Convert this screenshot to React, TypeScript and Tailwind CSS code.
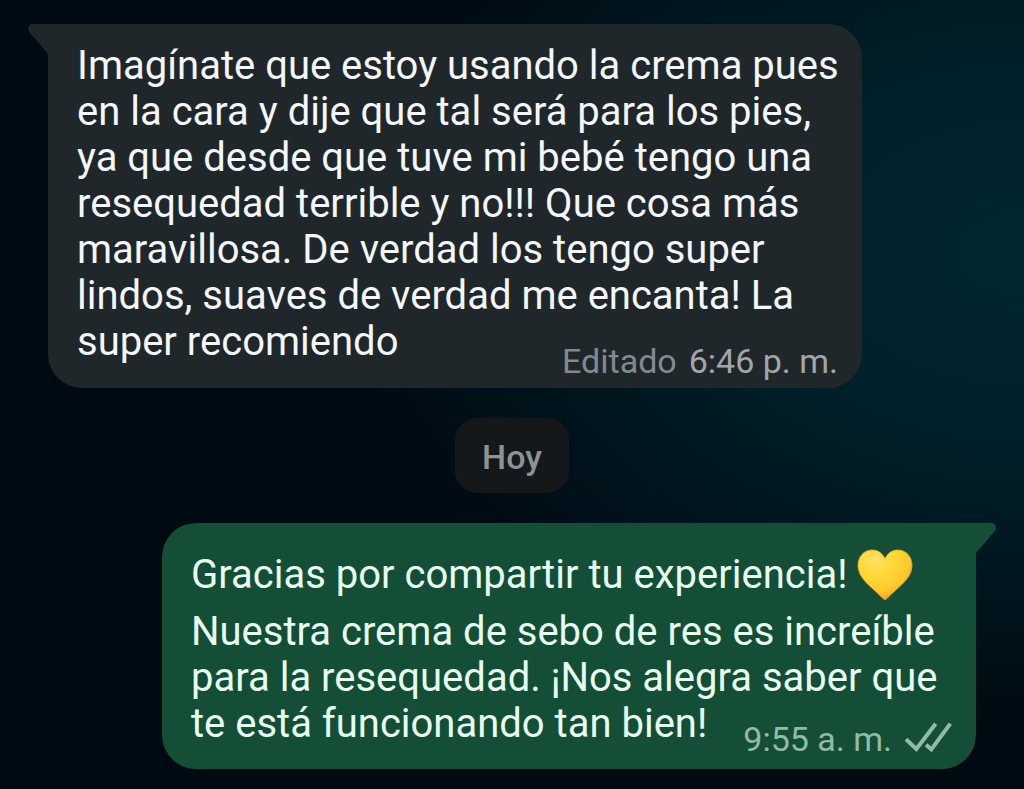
import { clsx } from "clsx";

const HeartEmoji = () => (
  <svg
    role="img"
    aria-label="Corazón amarillo"
    viewBox="0 0 56 52"
    className="inline-block w-[56px] h-[52px] mt-[7px] mb-2 align-[-21px]"
  >
    <defs>
      <radialGradient id="heart" cx="0.32" cy="0.2" r="0.85">
        <stop offset="0" stopColor="#ffe066" />
        <stop offset="0.35" stopColor="#ffd93b" />
        <stop offset="0.75" stopColor="#fdc92c" />
        <stop offset="1" stopColor="#ee9f22" />
      </radialGradient>
    </defs>
    <path
      d="M28 9.500C25 3.500 20.500 1 15 1C7 1 1 7.500 1 16.500C1 30 15 38 26.300 49.800C27.400 50.900 28.600 50.900 29.700 49.800C41 38 55 30 55 16.500C55 7.500 49 1 41 1C35.500 1 31 3.500 28 9.500Z"
      fill="url(#heart)"
      stroke="#e9a323"
      strokeWidth="0.8"
    />
  </svg>
);

const ReadChecks = () => (
  <svg
    role="img"
    aria-label="Entregado"
    viewBox="550 95 144 90"
    className="w-[48px] h-[30px] mb-1"
    fill="none"
    stroke="currentColor"
    strokeWidth="12"
  >
    <path d="M556 147L587 176L645 100" />
    <path d="M616 163L632 177L689 100" />
  </svg>
);

interface BubbleProps {
  sent?: boolean;
  children: React.ReactNode;
  meta: React.ReactNode;
}

const Bubble = ({ sent = false, children, meta }: BubbleProps) => (
  <article
    className={clsx(
      "relative flex flex-col w-full max-w-[814px] pl-[29px] pr-5 pt-[19px] rounded-[34px]",
      sent
        ? "self-end pb-[10px] rounded-tr-none bg-[#154e37] text-[#e6fdf0]"
        : "pb-[7px] rounded-tl-none bg-[#20272b] text-[#f3f6fa]"
    )}
  >
    <svg
      aria-hidden="true"
      viewBox="0 0 20 30"
      className={clsx(
        "absolute top-0 w-5 h-[30px]",
        sent
          ? "left-full -scale-x-100 text-[#154e37]"
          : "right-full text-[#20272b]"
      )}
    >
      <path
        d="M20 0H4.500C1 0-1 4 1.200 8L20 30Z"
        fill="currentColor"
      />
    </svg>
    <p className="text-[40px] leading-[46px]">{children}</p>
    <footer
      className={clsx(
        "flex items-center self-end gap-3 mr-1 text-[34px] leading-[40px]",
        sent ? "-mt-7" : "-mt-6"
      )}
    >
      {meta}
    </footer>
  </article>
);

const App: React.FC = () => {
  return (
    <main className="min-h-screen flex flex-col gap-[30px] px-12 pt-6 pb-5 font-['Roboto',sans-serif] bg-[#000a12] bg-[radial-gradient(ellipse_68%_60%_at_100%_32%,#02272f_0%,#01212a_35%,#001720_65%,transparent_100%)]">
      <Bubble
        meta={
          <>
            <span className="text-[#838a8e]">Editado</span>
            <time className="text-[#a0a6aa]">6:46 p. m.</time>
          </>
        }
      >
        Imagínate que estoy usando la crema pues en la cara y dije que tal será
        para los pies, ya que desde que tuve mi bebé tengo una resequedad
        terrible y no!!! Que cosa más maravillosa. De verdad los tengo super
        lindos, suaves de verdad me encanta! La super recomiendo
      </Bubble>

      <div className="self-center px-[27px] pt-[19px] pb-4 rounded-[22px] bg-[#14181b] text-[#8c9296] text-[34px] leading-[40px] font-medium">
        Hoy
      </div>

      <Bubble
        sent
        meta={
          <div className="flex items-center gap-3 text-[#92bba5]">
            <time>9:55 a. m.</time>
            <ReadChecks />
          </div>
        }
      >
        Gracias por compartir tu experiencia! <HeartEmoji />
        <br />
        Nuestra crema de sebo de res es increíble para la resequedad. ¡Nos
        alegra saber que te está funcionando tan bien!
      </Bubble>
    </main>
  );
};

export default App;
